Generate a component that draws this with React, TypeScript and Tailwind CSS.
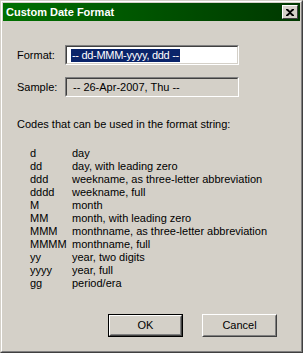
const codes: [string, string][] = [
  ['d', 'day'],
  ['dd', 'day, with leading zero'],
  ['ddd', 'weekname, as three-letter abbreviation'],
  ['dddd', 'weekname, full'],
  ['M', 'month'],
  ['MM', 'month, with leading zero'],
  ['MMM', 'monthname, as three-letter abbreviation'],
  ['MMMM', 'monthname, full'],
  ['yy', 'year, two digits'],
  ['yyyy', 'year, full'],
  ['gg', 'period/era'],
];

// sunken 3d edit box, classic windows style
const Field = ({ children, white }: { children: React.ReactNode; white?: boolean }) => (
  <div className="w-[174px] h-[20px] border border-t-[#808080] border-l-[#808080] border-b-white border-r-white">
    <div
      className={`h-full border border-t-[#404040] border-l-[#404040] border-b-[#d4d0c8] border-r-[#d4d0c8] flex items-center pl-[4px] ${
        white ? 'bg-white' : 'bg-[#d4d0c8]'
      }`}
    >
      {children}
    </div>
  </div>
);

const Button = ({ label, isDefault }: { label: string; isDefault?: boolean }) => (
  <div className={`w-[75px] h-[23px] ${isDefault ? 'border border-black' : ''}`}>
    <div className="h-full border border-t-white border-l-white border-b-[#404040] border-r-[#404040]">
      <div className="h-full border border-t-[#d4d0c8] border-l-[#d4d0c8] border-b-[#808080] border-r-[#808080] flex items-center justify-center">
        {label}
      </div>
    </div>
  </div>
);

export default function App() {
  return (
    <div
      className="w-[303px] h-[353px] bg-[#d4d0c8] border border-t-[#d4d0c8] border-l-[#d4d0c8] border-b-[#404040] border-r-[#404040] text-[11px] text-black"
      style={{ fontFamily: '"Liberation Sans", Arial, sans-serif' }}
    >
      <div className="h-full border border-t-white border-l-white border-b-[#808080] border-r-[#808080] p-[1px] flex flex-col">
        {/* Title bar */}
        <div className="h-[18px] flex items-center justify-between bg-gradient-to-r from-[#007000] to-[#003800] pl-[3px] pr-[2px]">
          <span className="text-white font-bold text-[11px] leading-none">Custom Date Format</span>
          <div className="w-[16px] h-[14px] bg-[#d4d0c8] border border-t-white border-l-white border-b-[#404040] border-r-[#404040] flex items-center justify-center">
            <svg width="8" height="7" viewBox="0 0 8 7">
              <path d="M0 0h2l2 2 2-2h2v1L5 3.5 8 6v1H6L4 5 2 7H0V6l3-2.5L0 1z" fill="#000" />
            </svg>
          </div>
        </div>

        {/* Body */}
        <div className="flex-1 flex flex-col pt-[24px] pl-[14px]">
          <div className="flex items-center">
            <span className="w-[48px]">Format:</span>
            <Field white>
              <span className="bg-[#0a246a] text-white leading-[13px] px-[1px] tracking-[-0.3px]">-- dd-MMM-yyyy, ddd --</span>
            </Field>
          </div>
          <div className="flex items-center mt-[12px]">
            <span className="w-[48px]">Sample:</span>
            <Field>
              <span className="leading-[13px] pl-[2px]">-- 26-Apr-2007, Thu --</span>
            </Field>
          </div>

          <div className="mt-[21px] leading-[13px]">Codes that can be used in the format string:</div>

          <div className="mt-[16px] pl-[13px] flex flex-col">
            {codes.map(([c, d]) => (
              <div key={c} className="flex leading-[13px]">
                <span className="w-[42px]">{c}</span>
                <span>{d}</span>
              </div>
            ))}
          </div>

          <div className="flex justify-end gap-[19px] pr-[23px] mt-[24px]">
            <Button label="OK" isDefault />
            <Button label="Cancel" />
          </div>
        </div>
      </div>
    </div>
  );
}
